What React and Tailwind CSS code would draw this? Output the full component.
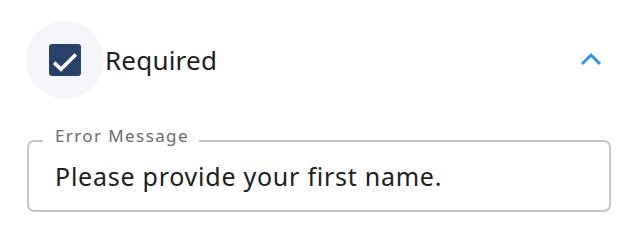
import React from "react";

export default function App() {
  return (
    <div className="w-[640px] h-[242px] bg-white pl-[26px] pr-[29px] pt-[21px]" style={{ fontFamily: '"Noto Sans", "Open Sans", sans-serif' }}>
      <div className="flex items-center">
        <div className="w-[78px] h-[78px] rounded-full bg-[#f3f5f8] flex items-center justify-center">
          <div className="w-[32px] h-[32px] rounded-[3px] bg-[#27416b]">
            <svg width="32" height="32" viewBox="0 0 32 32" fill="none">
              <path d="M5.2 18.6L12 25.2L26.8 10.4" stroke="white" strokeWidth="3.6" strokeLinecap="butt" strokeLinejoin="miter" />
            </svg>
          </div>
        </div>
        <span className="ml-[1px] text-[26px] text-[#1e1e1e] leading-none tracking-[0.2px]">Required</span>
        <div className="ml-auto mr-[9px] -mt-[2px]">
          <svg width="22" height="14" viewBox="0 0 22 14" fill="none">
            <path d="M2 12L11 3l9 9" stroke="#3391f2" strokeWidth="3" strokeLinecap="butt" />
          </svg>
        </div>
      </div>
      <div className="relative mt-[41px] ml-[1px] h-[72px] border-2 border-[#c6c6c6] rounded-[7px] flex items-center pl-[26px]">
        <span className="absolute -top-[17px] left-[14px] bg-white pl-[12px] pr-[10px] text-[17px] leading-[22px] text-[#6b6b6b] tracking-[1.4px]">Error Message</span>
        <span className="text-[25px] text-[#202020] leading-none tracking-[0.75px]">Please provide your first name.</span>
      </div>
    </div>
  );
}
